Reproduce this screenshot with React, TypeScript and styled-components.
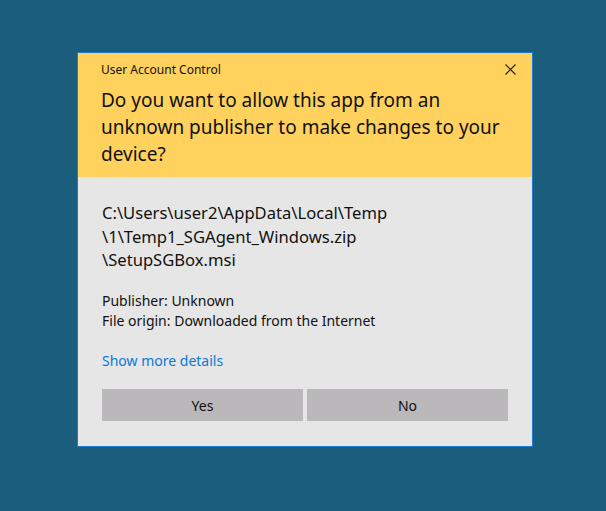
import React from 'react';
import styled, { createGlobalStyle } from 'styled-components';

const GlobalStyle = createGlobalStyle`
  html, body {
    margin: 0;
    padding: 0;
    height: 100%;
    background-color: #1b5d7d;
  }
  #root {
    height: 100%;
  }
`;

export default function App() {
  return (
    <>
      <GlobalStyle />
      <Desktop>
        <Dialog>
          <Header>
            <TitleBar>
              <WindowTitle>User Account Control</WindowTitle>
              <CloseButton aria-label="Close">
                <svg width="11" height="11" viewBox="0 0 11 11">
                  <path d="M0.5 0.5 L10.5 10.5 M10.5 0.5 L0.5 10.5" stroke="#1a1a1a" strokeWidth="1.1" />
                </svg>
              </CloseButton>
            </TitleBar>
            <Question>
              Do you want to allow this app from an unknown publisher to make changes to your device?
            </Question>
          </Header>
          <Body>
            <FilePath>
              C:\Users\user2\AppData\Local\Temp
              <br />
              \1\Temp1_SGAgent_Windows.zip
              <br />
              \SetupSGBox.msi
            </FilePath>
            <Details>
              <div>Publisher: Unknown</div>
              <div>File origin: Downloaded from the Internet</div>
            </Details>
            <MoreLink href="#">Show more details</MoreLink>
            <Buttons>
              <Button type="button">Yes</Button>
              <Button type="button">No</Button>
            </Buttons>
          </Body>
        </Dialog>
      </Desktop>
    </>
  );
}

const Desktop = styled.div`
  display: flex;
  justify-content: flex-start;
  align-items: flex-start;
  padding: 52px 0 0 77px;
  font-family: 'Noto Sans', 'Open Sans', sans-serif;
`;

const Dialog = styled.div`
  width: 454px;
  border: 1px solid #1f7ad1;
  background-color: #e6e6e6;
  display: flex;
  flex-direction: column;
`;

const Header = styled.div`
  background-color: #ffd15d;
  height: 124px;
  padding: 0 0 0 23px;
  box-sizing: border-box;
`;

const TitleBar = styled.div`
  display: flex;
  justify-content: space-between;
  align-items: center;
  height: 33px;
`;

const WindowTitle = styled.span`
  font-size: 12px;
  color: #111;
`;

const CloseButton = styled.button`
  width: 44px;
  height: 33px;
  border: none;
  background: transparent;
  display: flex;
  align-items: center;
  justify-content: center;
  padding: 0;
  cursor: pointer;
`;

const Question = styled.div`
  font-size: 19px;
  line-height: 27px;
  color: #111;
  padding-right: 24px;
  margin-top: 1px;
`;

const Body = styled.div`
  padding: 24px 24px 25px 24px;
  display: flex;
  flex-direction: column;
  color: #111;
`;

const FilePath = styled.div`
  font-size: 16.6px;
  line-height: 23.5px;
`;

const Details = styled.div`
  margin-top: 19px;
  font-size: 14px;
  line-height: 20px;
`;

const MoreLink = styled.a`
  margin-top: 20px;
  font-size: 14px;
  line-height: 20px;
  color: #0b78d7;
  text-decoration: none;
  align-self: flex-start;
`;

const Buttons = styled.div`
  display: grid;
  grid-template-columns: 1fr 1fr;
  gap: 4px;
  margin-top: 18px;
`;

const Button = styled.button`
  height: 32px;
  border: none;
  background-color: #bab8ba;
  font-family: inherit;
  font-size: 14px;
  color: #111;
  cursor: pointer;
  padding: 1px 0 0;
`;
